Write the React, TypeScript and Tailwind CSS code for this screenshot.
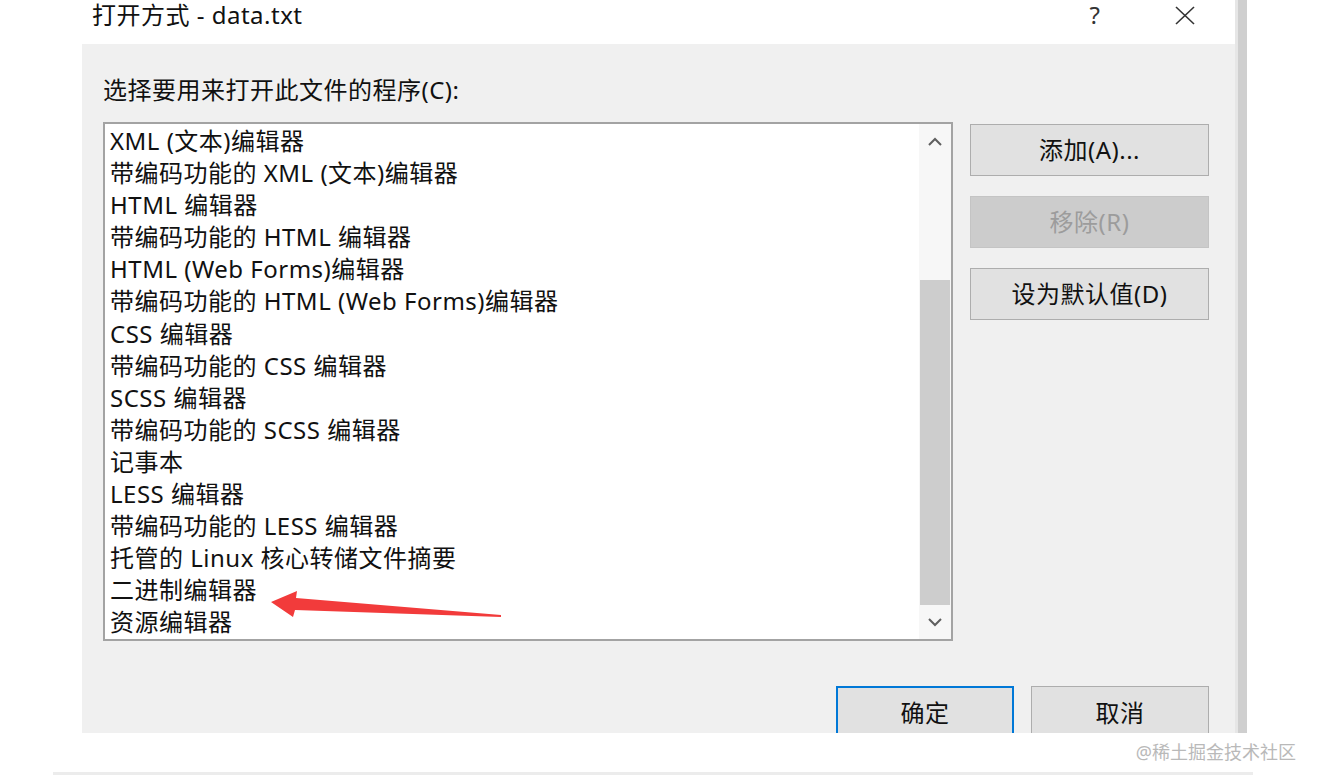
import React from 'react'

const programs = [
  'XML (文本)编辑器',
  '带编码功能的 XML (文本)编辑器',
  'HTML 编辑器',
  '带编码功能的 HTML 编辑器',
  'HTML (Web Forms)编辑器',
  '带编码功能的 HTML (Web Forms)编辑器',
  'CSS 编辑器',
  '带编码功能的 CSS 编辑器',
  'SCSS 编辑器',
  '带编码功能的 SCSS 编辑器',
  '记事本',
  'LESS 编辑器',
  '带编码功能的 LESS 编辑器',
  '托管的 Linux 核心转储文件摘要',
  '二进制编辑器',
  '资源编辑器',
]

function Chevron({ up }: { up?: boolean }) {
  return (
    <svg width="16" height="10" viewBox="0 0 16 10" fill="none" stroke="#5f5f5f" strokeWidth="2">
      {up ? <polyline points="2,8 8,2 14,8" /> : <polyline points="2,2 8,8 14,2" />}
    </svg>
  )
}

function ProgramList() {
  return (
    <div className="flex w-[850px] h-[519px] border-2 border-[#a3a3a3] bg-white">
      <div className="flex-1 pl-[5px] pt-[1px]">
        {programs.map((p) => (
          <div key={p} className="h-[32.1px] leading-[32.1px] whitespace-nowrap text-[#111]">
            {p}
          </div>
        ))}
      </div>
      {/* scrollbar */}
      <div className="w-[32px] bg-[#f7f7f7] flex flex-col items-center">
        <div className="h-[36px] flex items-center justify-center">
          <Chevron up />
        </div>
        <div className="h-[120px]" />
        <div className="w-[30px] h-[325px] bg-[#cdcdcd]" />
        <div className="flex-1 flex items-center justify-center">
          <Chevron />
        </div>
      </div>
    </div>
  )
}

function SideButton({ label, disabled }: { label: string; disabled?: boolean }) {
  return (
    <div
      className={
        disabled
          ? 'h-[52px] flex items-center justify-center bg-[#cccccc] border border-[#c4c4c4] text-[#9c9c9c]'
          : 'h-[52px] flex items-center justify-center bg-[#e1e1e1] border border-[#adadad] text-[#111]'
      }
    >
      {label}
    </div>
  )
}

export default function App() {
  return (
    <div
      className="relative w-[1318px] h-[775px] bg-white overflow-hidden text-[24px] tracking-[0.5px]"
      style={{ fontFamily: '"Noto Sans", "Noto Sans CJK SC", sans-serif' }}
    >
      <div className="flex h-[733px]">
        <div className="w-[82px]" />
        <div className="w-[1153px] flex flex-col">
          {/* title bar */}
          <div className="h-[44px] flex items-start pt-[3px] bg-white leading-[24px]">
            <div className="h-[24px] flex items-center pl-[10px] text-[#111] flex-1">打开方式 - data.txt</div>
            <div className="h-[24px] w-[40px] flex items-center justify-center text-[#333] mr-[50px]">?</div>
            <div className="h-[24px] w-[40px] flex items-center justify-center mr-[30px]">
              <svg width="20" height="19" viewBox="0 0 20 19" stroke="#333" strokeWidth="1.6">
                <line x1="1" y1="1" x2="19" y2="18" />
                <line x1="19" y1="1" x2="1" y2="18" />
              </svg>
            </div>
          </div>
          {/* dialog body */}
          <div className="flex-1 bg-[#f0f0f0] pl-[21px] pt-[31px] overflow-hidden">
            <div className="h-[30px] leading-[30px] text-[#111]">选择要用来打开此文件的程序(C):</div>
            <div className="flex gap-[17px] mt-[17px]">
              <ProgramList />
              <div className="w-[239px] flex flex-col gap-[20px] pt-[2px]">
                <SideButton label="添加(A)..." />
                <SideButton label="移除(R)" disabled />
                <SideButton label="设为默认值(D)" />
              </div>
            </div>
            <div className="flex gap-[17px] pl-[733px] mt-[45px]">
              <div className="w-[178px] h-[54px] flex items-center justify-center bg-[#e1e1e1] border-2 border-[#0078d7] text-[#111]">
                确定
              </div>
              <div className="w-[178px] h-[54px] flex items-center justify-center bg-[#e1e1e1] border border-[#adadad] text-[#111]">
                取消
              </div>
            </div>
          </div>
        </div>
        <div className="w-[3px] bg-[#e6e6e6]" />
        <div className="w-[9px] bg-[#cfcfcf]" />
      </div>

      {/* footer with watermark */}
      <div className="h-[39px] flex justify-end items-center pr-[22px]">
        <span className="text-[18px] tracking-normal text-[#b9b9b9]">@稀土掘金技术社区</span>
      </div>
      <div className="ml-[53px] w-[1200px] h-[3px] bg-[#ececec]" />

      {/* red annotation arrow */}
      <svg className="absolute left-[268px] top-[586px]" width="236" height="36" viewBox="268 586 236 36">
        <polygon points="271,602 297,591 296,598 501,615 501,617 295,610 293,617" fill="#f23b3b" />
      </svg>
    </div>
  )
}
